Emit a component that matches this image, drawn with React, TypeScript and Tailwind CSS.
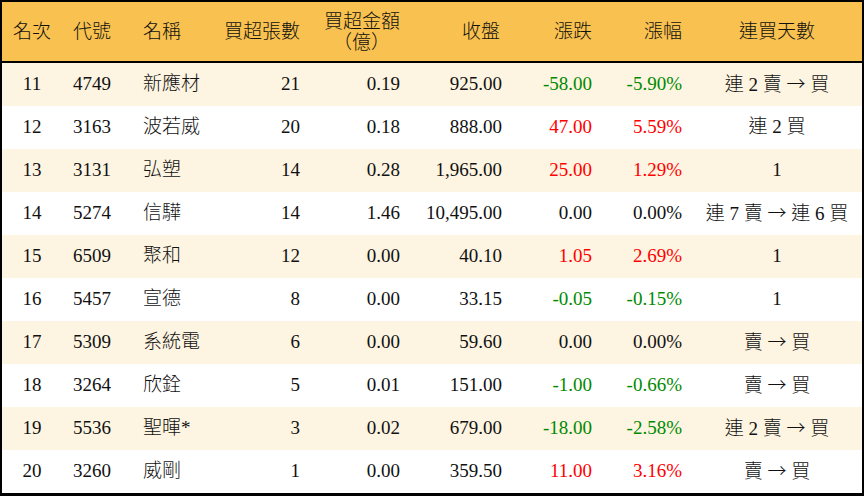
import React from "react";

type Row = {
  rank: string;
  code: string;
  name: string;
  vol: string;
  amt: string;
  close: string;
  chg: string;
  pct: string;
  days: string;
};

const rows: Row[] = [
  { rank: "11", code: "4749", name: "新應材", vol: "21", amt: "0.19", close: "925.00", chg: "-58.00", pct: "-5.90%", days: "連 2 賣 → 買" },
  { rank: "12", code: "3163", name: "波若威", vol: "20", amt: "0.18", close: "888.00", chg: "47.00", pct: "5.59%", days: "連 2 買" },
  { rank: "13", code: "3131", name: "弘塑", vol: "14", amt: "0.28", close: "1,965.00", chg: "25.00", pct: "1.29%", days: "1" },
  { rank: "14", code: "5274", name: "信驊", vol: "14", amt: "1.46", close: "10,495.00", chg: "0.00", pct: "0.00%", days: "連 7 賣 → 連 6 買" },
  { rank: "15", code: "6509", name: "聚和", vol: "12", amt: "0.00", close: "40.10", chg: "1.05", pct: "2.69%", days: "1" },
  { rank: "16", code: "5457", name: "宣德", vol: "8", amt: "0.00", close: "33.15", chg: "-0.05", pct: "-0.15%", days: "1" },
  { rank: "17", code: "5309", name: "系統電", vol: "6", amt: "0.00", close: "59.60", chg: "0.00", pct: "0.00%", days: "賣 → 買" },
  { rank: "18", code: "3264", name: "欣銓", vol: "5", amt: "0.01", close: "151.00", chg: "-1.00", pct: "-0.66%", days: "賣 → 買" },
  { rank: "19", code: "5536", name: "聖暉*", vol: "3", amt: "0.02", close: "679.00", chg: "-18.00", pct: "-2.58%", days: "連 2 賣 → 買" },
  { rank: "20", code: "3260", name: "威剛", vol: "1", amt: "0.00", close: "359.50", chg: "11.00", pct: "3.16%", days: "賣 → 買" },
];

function colorFor(v: string) {
  if (v.startsWith("-")) return "text-[#008a00]";
  if (/^0\.00/.test(v)) return "text-[#111111]";
  return "text-[#ff0000]";
}

function Days({ text }: { text: string }) {
  const parts = text.split("→");
  return (
    <>
      {parts.map((p, i) => (
        <React.Fragment key={i}>
          {i > 0 && (
            <span style={{ fontFamily: '"Noto Sans CJK TC", "DejaVu Sans", sans-serif' }} className="font-light">
              →
            </span>
          )}
          {p}
        </React.Fragment>
      ))}
    </>
  );
}

export default function App() {
  return (
    <div
      className="w-[864px] h-[496px] bg-white text-[#111111] border-x-2 border-t-2 border-b-[3px] border-black flex flex-col overflow-hidden font-light"
      style={{ fontFamily: '"Liberation Serif", "Noto Sans CJK TC", serif' }}
    >
      <div className="h-[59px] shrink-0 bg-[#f9c14f] flex items-center text-[19px] leading-[21px] border-b-2 border-black box-content whitespace-nowrap">
        <div className="w-[60px] text-center">名次</div>
        <div className="w-[60px] text-center">代號</div>
        <div className="w-[110px] pl-[21px]">名稱</div>
        <div className="w-[68px] flex justify-end">
          <span>買超張數</span>
        </div>
        <div className="w-[100px] flex flex-col items-end">
          <span>買超金額</span>
          <span className="pr-[10px]">（億）</span>
        </div>
        <div className="w-[102px] text-right pr-[2px]">收盤</div>
        <div className="w-[90px] text-right">漲跌</div>
        <div className="w-[90px] text-right">漲幅</div>
        <div className="flex-1 pl-[10px] text-center">連買天數</div>
      </div>
      {rows.map((r, i) => (
        <div
          key={r.rank}
          className={`h-[43px] shrink-0 flex items-center text-[19px] whitespace-nowrap ${i % 2 === 0 ? "bg-[#fdf4e1]" : "bg-white"}`}
        >
          <div className="w-[60px] text-center">{r.rank}</div>
          <div className="w-[60px] text-center">{r.code}</div>
          <div className="w-[110px] pl-[21px]">{r.name}</div>
          <div className="w-[68px] text-right">{r.vol}</div>
          <div className="w-[100px] text-right">{r.amt}</div>
          <div className="w-[102px] text-right">{r.close}</div>
          <div className={`w-[90px] text-right ${colorFor(r.chg)}`}>{r.chg}</div>
          <div className={`w-[90px] text-right ${colorFor(r.pct)}`}>{r.pct}</div>
          <div className="flex-1 pl-[10px] text-center">
            <Days text={r.days} />
          </div>
        </div>
      ))}
    </div>
  );
}
